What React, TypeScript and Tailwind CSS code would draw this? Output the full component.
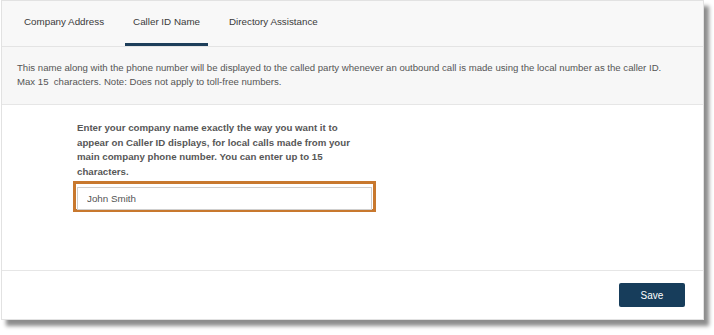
const tabs = ["Company Address", "Caller ID Name", "Directory Assistance"];

export default function App() {
  const active = "Caller ID Name";

  return (
    <div className="w-[714px] h-[335px] bg-white font-['Liberation_Sans',Arial,sans-serif]">
      <div className="ml-px w-[703px] h-[320px] flex flex-col bg-white border border-[#e2e2e2] shadow-[5px_6px_4px_rgba(0,0,0,0.45)]">
        {/* tabs */}
        <div className="h-[46px] shrink-0 flex items-stretch gap-[13px] pl-[14px] bg-[#f8f8f8] border-b border-[#e4e4e4]">
          {tabs.map((t) => (
            <div
              key={t}
              className={`flex items-center px-[8px] text-[9.8px] text-[#3a3a3a] border-b-[3px] ${
                t === active ? "border-[#1d3e5a]" : "border-transparent"
              }`}
            >
              {t}
            </div>
          ))}
        </div>

        {/* description */}
        <div className="h-[58px] shrink-0 pl-[15px] pr-[30px] pt-[14px] bg-[#f7f7f7] border-b border-[#e6e6e6] text-[9.6px] leading-[14px] text-[#555]">
          This name along with the phone number will be displayed to the called party whenever an outbound call is made using the local number as the caller ID. Max 15&nbsp; characters. Note: Does not apply to toll-free numbers.
        </div>

        {/* body */}
        <div className="flex-1 pl-[71px] pt-[16px] border-b border-[#e6e6e6]">
          <p className="w-[290px] pl-[4px] text-[9.7px] font-bold leading-[14.7px] text-[#575757]">
            Enter your company name exactly the way you want it to appear on Caller ID displays, for local calls made from your main company phone number. You can enter up to 15 characters.
          </p>
          <div className="mt-px w-[303px] h-[31px] border-[3px] border-[#c8782e] p-px">
            <input
              defaultValue="John Smith"
              className="w-full h-full border border-[#cfcfcf] bg-white px-[9px] text-[9.8px] text-[#555] outline-none"
            />
          </div>
        </div>

        {/* footer */}
        <div className="h-[48px] shrink-0 flex items-center justify-end pr-[18px]">
          <button className="w-[66px] h-[24px] rounded-[2px] bg-[#173d5b] text-white text-[10px]">
            Save
          </button>
        </div>
      </div>
    </div>
  );
}
